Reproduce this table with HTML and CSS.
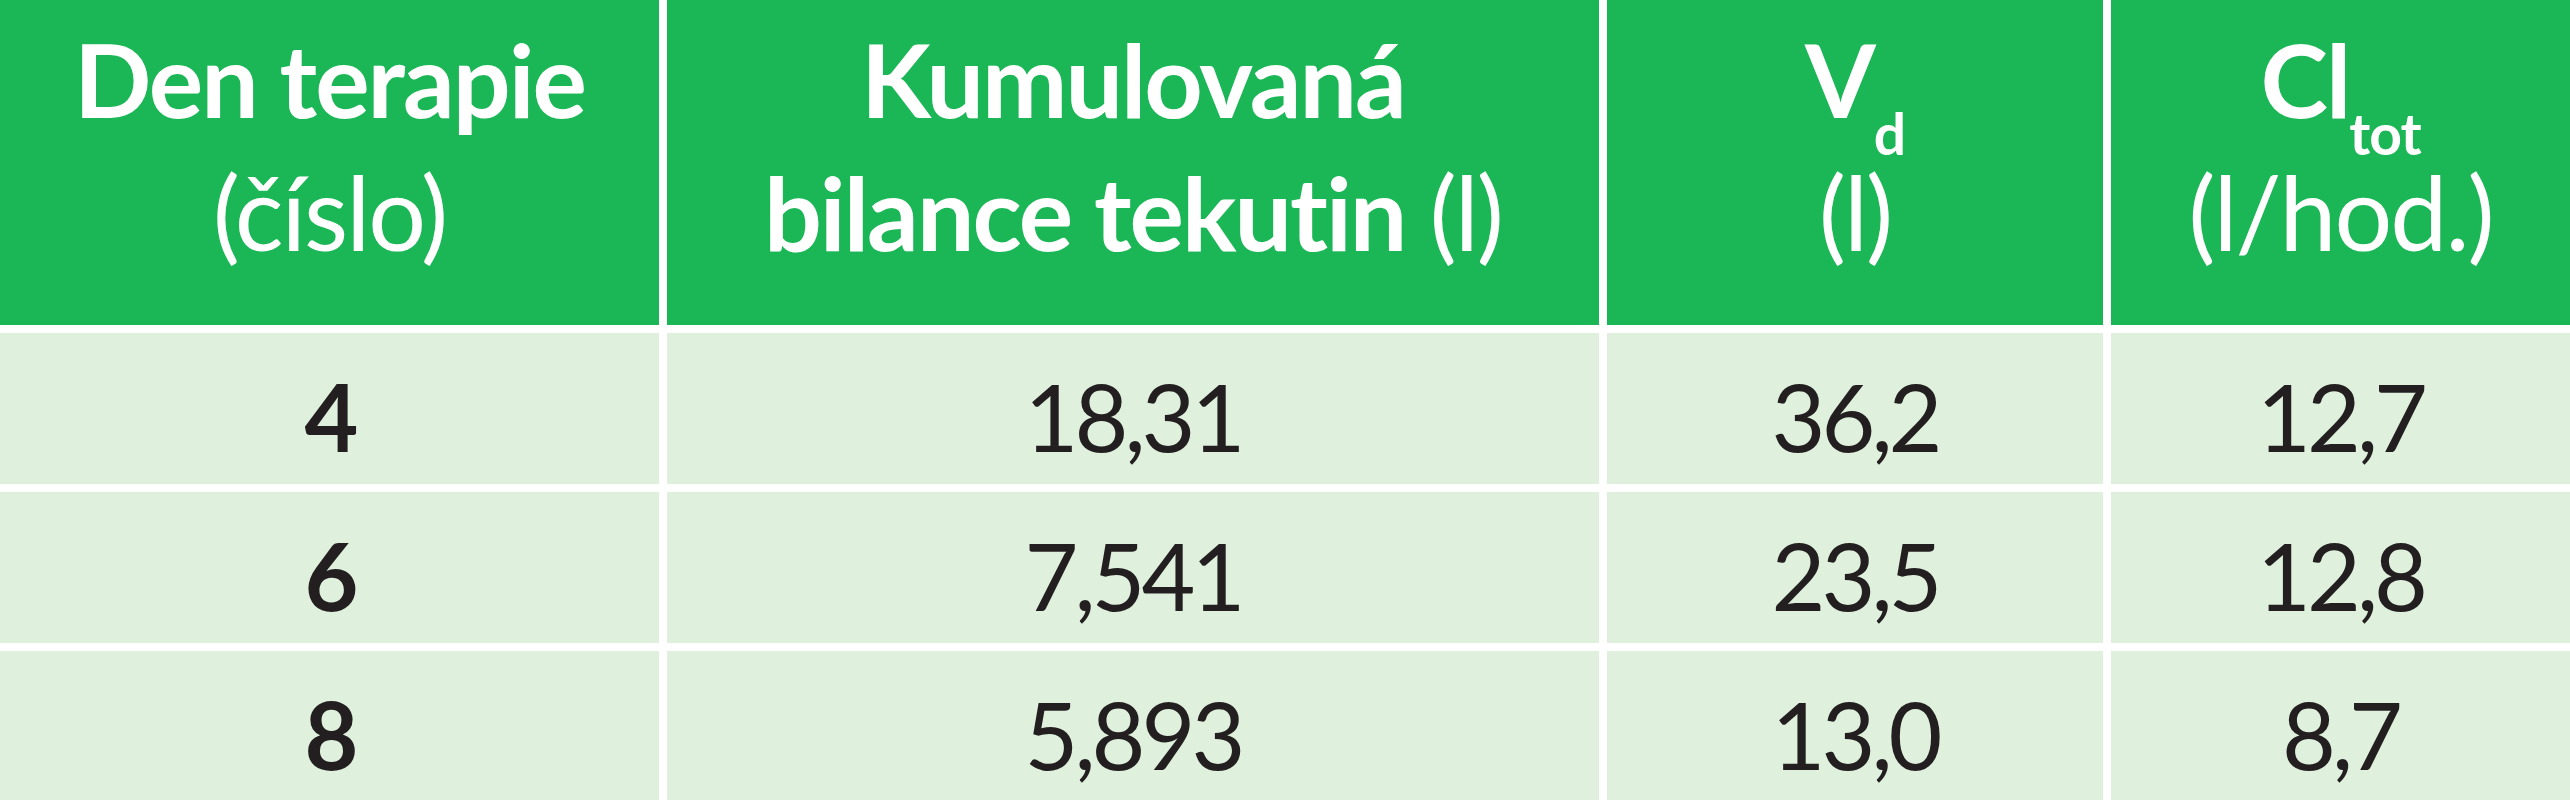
FILE: index.html
```html
<!DOCTYPE html>
<html lang="cs">
<head>
<meta charset="utf-8">
<title>Tabulka</title>
<link rel="stylesheet" href="styles.css">
</head>
<body>
<div class="table">
  <div class="cell head">
    <div class="line"><b>Den terapie</b></div>
    <div class="line">(číslo)</div>
  </div>
  <div class="cell head">
    <div class="line"><b>Kumulovaná</b></div>
    <div class="line"><b>bilance tekutin</b> (l)</div>
  </div>
  <div class="cell head">
    <div class="line"><b>V<span class="sub">d</span></b></div>
    <div class="line">(l)</div>
  </div>
  <div class="cell head">
    <div class="line"><b>Cl<span class="sub">tot</span></b></div>
    <div class="line">(l/hod.)</div>
  </div>

  <div class="cell body bold">4</div>
  <div class="cell body">18,31</div>
  <div class="cell body">36,2</div>
  <div class="cell body">12,7</div>

  <div class="cell body bold">6</div>
  <div class="cell body">7,541</div>
  <div class="cell body">23,5</div>
  <div class="cell body">12,8</div>

  <div class="cell body bold">8</div>
  <div class="cell body">5,893</div>
  <div class="cell body">13,0</div>
  <div class="cell body">8,7</div>
</div>
</body>
</html>
```

FILE: styles.css
```css
html, body {
  margin: 0;
  padding: 0;
  background: #ffffff;
}

body {
  width: 2570px;
  height: 800px;
  overflow: hidden;
  font-family: Lato, "Open Sans", "Liberation Sans", sans-serif;
}

.table {
  display: grid;
  grid-template-columns: 659px 932px 496px 459px;
  grid-template-rows: 325px 151px 151px 151px;
  column-gap: 8px;
  row-gap: 8px;
}

.cell {
  display: flex;
  flex-direction: column;
  align-items: center;
  box-sizing: border-box;
}

.head {
  background: #1bb656;
  color: #ffffff;
  font-size: 102px;
  line-height: 133px;
  padding-top: 12px;
  font-weight: 400;
}

.head b {
  font-weight: 700;
}

.line {
  white-space: nowrap;
  letter-spacing: -2px;
}

.sub {
  font-size: 57px;
  line-height: 0;
  vertical-align: -37px;
  letter-spacing: -1px;
}

.body {
  background: #dff1dd;
  color: #231f20;
  font-size: 93px;
  line-height: 1.2;
  padding-top: 28px;
  letter-spacing: -4px;
}

.bold {
  font-weight: 700;
}
```
